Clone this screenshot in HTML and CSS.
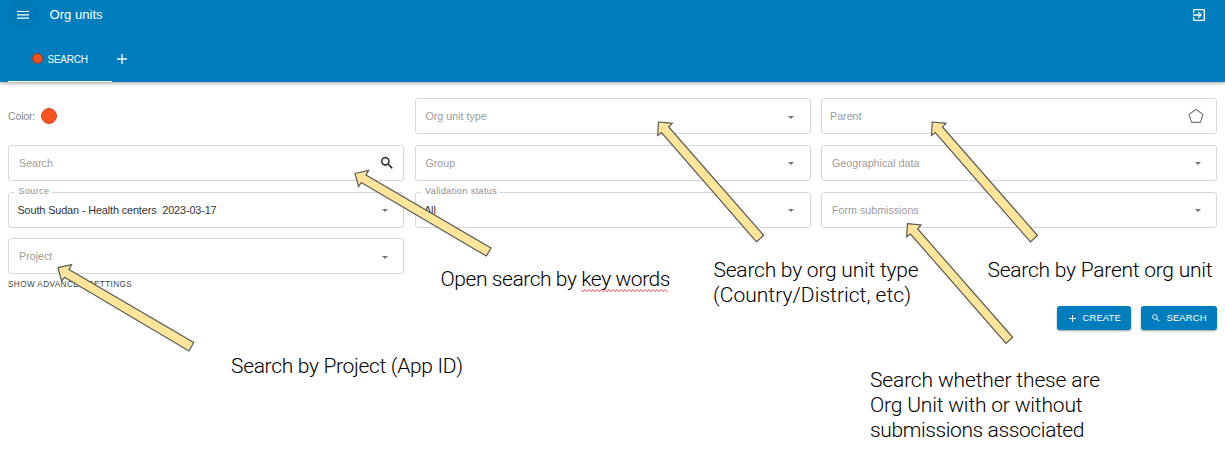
FILE: index.html
```html
<!DOCTYPE html>
<html lang="en">
<head>
<meta charset="utf-8">
<title>Org units</title>
<link rel="stylesheet" href="styles.css">
</head>
<body>
<header class="header">
  <div class="toolbar">
    <button class="menu-button" aria-label="Menu"><svg width="12" height="10" viewBox="0 0 12 10"><path d="M0 1.5h12M0 4.8h12M0 8.1h12" stroke="#fff" stroke-width="1.2"/></svg></button>
    <h1 class="title">Org units</h1>
    <svg class="logout" width="16" height="16" viewBox="0 0 24 24" fill="#fff"><path d="M10.09 15.59 11.5 17l5-5-5-5-1.41 1.41L12.67 11H3v2h9.67zM19 3H5a2 2 0 0 0-2 2v4h2V5h14v14H5v-4H3v4a2 2 0 0 0 2 2h14a2 2 0 0 0 2-2V5a2 2 0 0 0-2-2z"/></svg>
  </div>
  <nav class="tabs">
    <div class="tab"><span class="tab-dot"></span><span>SEARCH</span></div>
    <button class="add-tab" aria-label="Add"><svg width="10" height="10" viewBox="0 0 10 10"><path d="M5 0v10M0 5h10" stroke="#fff" stroke-width="1.3"/></svg></button>
  </nav>
</header>
<main class="content">
  <div class="filters">
    <div class="column">
      <div class="color-row"><span>Color:</span><span class="color-dot"></span></div>
      <div class="field"><span class="placeholder">Search</span><svg class="search-icon" width="16" height="16" viewBox="0 0 24 24" fill="#222" stroke="#222" stroke-width=".3"><path d="M15.5 14h-.79l-.28-.27A6.5 6.5 0 1 0 13.73 14.43l.27.28v.79l5 4.99L20.49 19zm-6 0a4.5 4.5 0 1 1 0-9 4.5 4.5 0 0 1 0 9z"/></svg></div>
      <div class="field"><span class="label">Source</span><span class="value">South Sudan - Health centers&nbsp; 2023-03-17</span><i class="caret"></i></div>
      <div class="field"><span class="placeholder">Project</span><i class="caret"></i></div>
      <div class="advanced">SHOW ADVANCED SETTINGS</div>
    </div>
    <div class="column">
      <div class="field"><span class="placeholder">Org unit type</span><i class="caret"></i></div>
      <div class="field"><span class="placeholder">Group</span><i class="caret"></i></div>
      <div class="field"><span class="label">Validation status</span><span class="value">All</span><i class="caret"></i></div>
    </div>
    <div class="column">
      <div class="field"><span class="placeholder parent">Parent</span><svg class="pentagon" width="16" height="16" viewBox="0 0 16 16"><path d="M8 1.2 15 6.5 12.4 14.4H3.6L1 6.5z" fill="none" stroke="#777" stroke-width="1.1"/></svg></div>
      <div class="field"><span class="placeholder">Geographical data</span><i class="caret"></i></div>
      <div class="field"><span class="placeholder">Form submissions</span><i class="caret"></i></div>
    </div>
  </div>
  <div class="actions">
    <button class="button create"><svg width="7" height="7" viewBox="0 0 7 7"><path d="M3.5 0v7M0 3.5h7" stroke="#fff"/></svg><span>CREATE</span></button>
    <button class="button search"><svg width="10" height="10" viewBox="0 0 24 24" fill="#fff"><path d="M15.5 14h-.79l-.28-.27A6.5 6.5 0 1 0 13.73 14.43l.27.28v.79l5 4.99L20.49 19zm-6 0a4.5 4.5 0 1 1 0-9 4.5 4.5 0 0 1 0 9z"/></svg><span>SEARCH</span></button>
  </div>
</main>
<svg class="annotations" width="1225" height="452" viewBox="0 0 1225 452">
  <g class="arrows">
    <path d="M355 173.500 368.700 170.300 366 175 491 248 486.300 256 361.300 182.500 358.500 186.500z"/>
    <path d="M58 267.700 71.500 264.700 69 269.500 193.700 342.500 189 351 64.500 277.300 61.500 281z"/>
    <path d="M658.500 122 672.300 123.300 668.700 127 763.700 235.300 756.500 242 661.500 132.500 657.700 135.500z"/>
    <path d="M932.300 122 946 123.300 942.500 127 1037.500 235.500 1030.500 242 935.300 132.500 931.500 135.500z"/>
    <path d="M907.500 223.700 921 225 917.700 229 1012.700 337.300 1006 343.500 910.500 234 906.700 236.700z"/>
  </g>
  <g class="notes">
    <text x="440.500" y="286" textLength="230">Open search by key words</text>
    <text x="231" y="373" textLength="232">Search by Project (App ID)</text>
    <text x="713.500" y="277" textLength="205">Search by org unit type</text>
    <text x="713" y="302" textLength="198">(Country/District, etc)</text>
    <text x="987.500" y="277" textLength="225">Search by Parent org unit</text>
    <text x="870" y="387" textLength="230">Search whether these are</text>
    <text x="870" y="412" textLength="212.500">Org Unit with or without</text>
    <text x="870" y="437" textLength="214.500">submissions associated</text>
  </g>
  <path class="squiggle" d="M581 289.500l2 2.200 2-2.200 2 2.200 2-2.200 2 2.200 2-2.200 2 2.200 2-2.200 2 2.200 2-2.200 2 2.200 2-2.200 2 2.200 2-2.200 2 2.200 2-2.200 2 2.200 2-2.200 2 2.200 2-2.200 2 2.200 2-2.200 2 2.200 2-2.200 2 2.200 2-2.200 2 2.200 2-2.200 2 2.200 2-2.200 2 2.200 2-2.200 2 2.200 2-2.200 2 2.200 2-2.200 2 2.200 2-2.200 2 2.200 2-2.200 2 2.200 2-2.200 2 2.200 1-1.200"/>
</svg>
</body>
</html>
```
FILE: styles.css
```css
* { box-sizing: border-box; }
body { margin: 0; width: 1225px; height: 452px; overflow: hidden; background: #fff; font-family: "Liberation Sans", Arial, sans-serif; position: relative; }
button { border: 0; padding: 0; background: none; font: inherit; color: inherit; }
svg { display: block; flex: none; }
.header { height: 82px; background: #007dbc; color: #fff; box-shadow: 0 1px 4px rgba(0,0,0,.4); display: flex; flex-direction: column; justify-content: space-between; }
.toolbar { height: 30px; display: flex; align-items: center; padding: 0 18.500px 1px 7.500px; }
.menu-button { width: 31px; height: 31px; border-radius: 50%; background: #0079b6; display: grid; place-items: center; flex: none; }
.title { margin: 0 auto 0 11px; font-size: 13.100px; font-weight: 400; line-height: 18px; }
.tabs { height: 46px; display: flex; padding-left: 8px; }
.tab { width: 104px; height: 46px; border-bottom: 1.500px solid #fff; display: flex; align-items: center; padding: 2px 0 0 24px; gap: 4.500px; font-size: 10px; line-height: 12px; letter-spacing: -.25px; }
.tab-dot { width: 11px; height: 11px; border-radius: 50%; background: #f4511e; border: 1.500px solid #8c3a26; margin-top: -2px; }
.add-tab { width: 19px; height: 45px; display: grid; place-items: center; }
.content { padding: 16px 8px 0; }
.filters { display: grid; grid-template-columns: repeat(3, 396px); justify-content: space-between; height: 208px; }
.column { display: flex; flex-direction: column; gap: 10.800px; min-width: 0; }
.field { height: 36px; flex: none; border: 1px solid #d8d8d8; border-radius: 3px; display: flex; align-items: center; padding: 0 14px 0 10px; position: relative; font-size: 10.700px; line-height: 14px; white-space: nowrap; }
.placeholder { color: #9c9c9c; margin-right: auto; }
.parent { margin-left: -2px; }
.value { color: #333; margin-left: -1.500px; margin-right: auto; font-size: 10.900px; letter-spacing: -.14px; }
.label { position: absolute; left: 5px; top: -8px; padding: 0 2px 0 4.500px; background: #fff; color: #8c8c8c; font-size: 9px; line-height: 12px; letter-spacing: .4px; }
.caret { border: 3.500px solid transparent; border-top-color: #757575; border-bottom: 0; margin: 2px 1px 0 0; }
.column:nth-child(2) .caret { margin-right: 1.500px; }
.search-icon { margin-right: -6px; }
.pentagon { margin-right: -2px; }
.color-row { height: 36px; display: flex; align-items: center; gap: 6px; color: #8a8a8a; font-size: 10.700px; line-height: 14px; letter-spacing: -.25px; flex: none; }
.color-dot { width: 16px; height: 16px; border-radius: 50%; background: #f9541f; border: 1.500px solid #d8481d; }
.advanced { margin-top: -6px; font-size: 8.200px; line-height: 12px; letter-spacing: .4px; color: #444; white-space: nowrap; }
.actions { display: flex; justify-content: flex-end; gap: 10px; }
.button { height: 24px; border-radius: 3px; background: #007dbc; color: #fff; box-shadow: 0 1px 2px rgba(0,0,0,.4); display: flex; align-items: center; font-size: 9.500px; line-height: 12px; letter-spacing: .1px; }
.create { width: 74px; padding-left: 12px; gap: 6.500px; }
.search { width: 76px; padding-left: 10px; gap: 5.500px; }
.annotations { position: absolute; left: 0; top: 0; }
.arrows path { fill: #ffe599; stroke: #595959; stroke-width: 1.200; }
.notes { font: 300 21px Roboto, sans-serif; fill: #000; }
.squiggle { fill: none; stroke: #e53945; stroke-width: .9; }
```
